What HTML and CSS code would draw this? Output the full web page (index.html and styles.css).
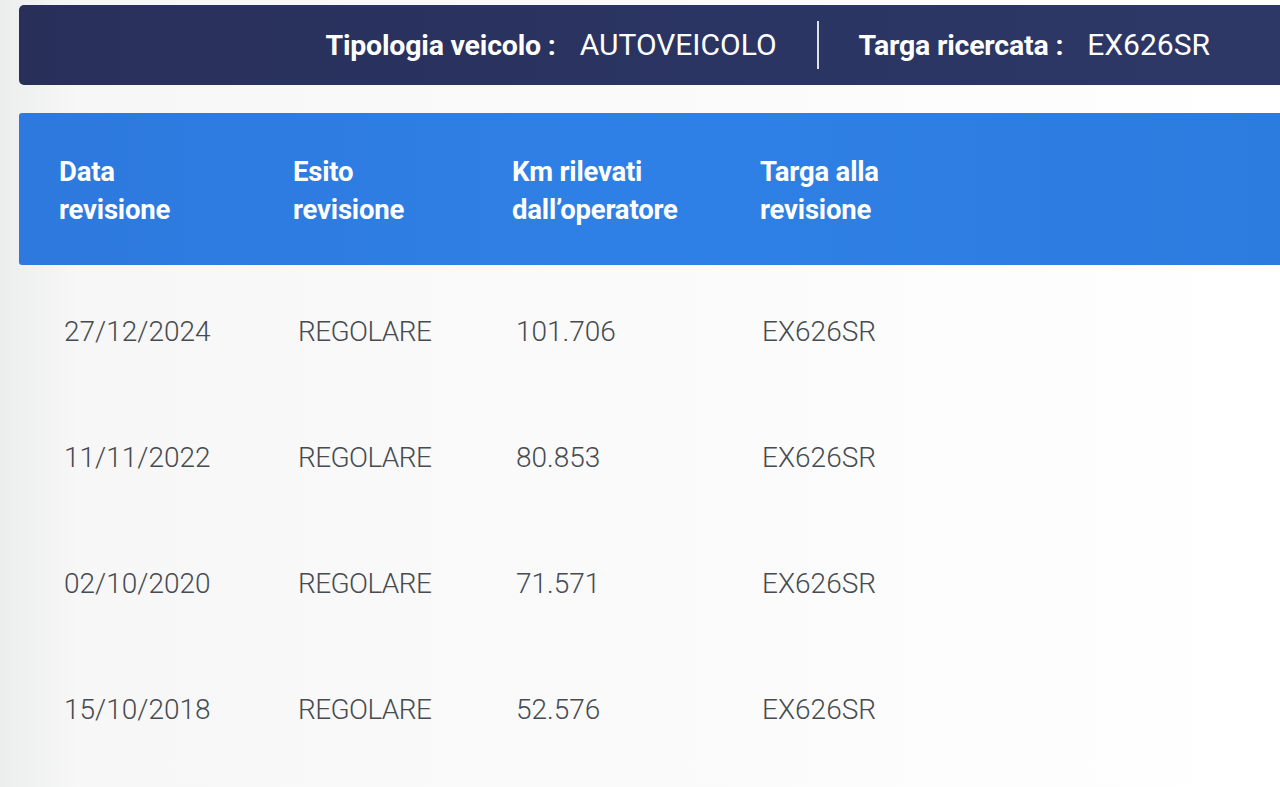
FILE: index.html
```html
<!DOCTYPE html>
<html lang="it">
<head>
<meta charset="utf-8">
<title>Revisioni veicolo</title>
<link rel="stylesheet" href="styles.css">
</head>
<body>
<div class="page">
  <div class="topbar">
    <div class="info"><span class="label">Tipologia veicolo :</span><span class="value">AUTOVEICOLO</span></div>
    <div class="divider"></div>
    <div class="info"><span class="label">Targa ricercata :</span><span class="value">EX626SR</span></div>
  </div>

  <div class="table">
    <div class="thead">
      <div class="th">Data<br>revisione</div>
      <div class="th">Esito<br>revisione</div>
      <div class="th">Km rilevati<br>dall’operatore</div>
      <div class="th">Targa alla<br>revisione</div>
    </div>
    <div class="tbody">
      <div class="row">
        <div class="td">27/12/2024</div>
        <div class="td">REGOLARE</div>
        <div class="td">101.706</div>
        <div class="td">EX626SR</div>
      </div>
      <div class="row">
        <div class="td">11/11/2022</div>
        <div class="td">REGOLARE</div>
        <div class="td">80.853</div>
        <div class="td">EX626SR</div>
      </div>
      <div class="row">
        <div class="td">02/10/2020</div>
        <div class="td">REGOLARE</div>
        <div class="td">71.571</div>
        <div class="td">EX626SR</div>
      </div>
      <div class="row">
        <div class="td">15/10/2018</div>
        <div class="td">REGOLARE</div>
        <div class="td">52.576</div>
        <div class="td">EX626SR</div>
      </div>
    </div>
  </div>
</div>
</body>
</html>
```

FILE: styles.css
```css
html, body {
  margin: 0;
  padding: 0;
}

body {
  background: linear-gradient(90deg, #eceeed 0%, #f6f7f6 6%, #fbfbfb 60%, #ffffff 100%);
  font-family: Roboto, "Open Sans", "Liberation Sans", sans-serif;
  height: 787px;
  overflow: hidden;
}

.page {
  padding: 5px 0 0 19px;
}

.topbar {
  height: 80px;
  background: linear-gradient(90deg, #28305a 0%, #2b3563 60%, #2d3867 100%);
  border-radius: 5px 0 0 5px;
  display: flex;
  align-items: center;
  justify-content: flex-end;
  padding-right: 70px;
  gap: 40px;
  color: #ffffff;
}

.info {
  display: flex;
  align-items: baseline;
  gap: 24px;
  line-height: 1;
}

.label {
  font-size: 28.5px;
  font-weight: 700;
  letter-spacing: -0.2px;
}

.value {
  font-size: 30px;
  font-weight: 400;
}

.divider {
  width: 2px;
  height: 48px;
  background: rgba(255, 255, 255, 0.85);
}

.table {
  margin-top: 28px;
}

.thead {
  height: 152px;
  background: linear-gradient(90deg, #2d79de 0%, #2f80e6 50%, #2c7bdf 100%);
  border-radius: 3px 0 0 3px;
  display: grid;
  grid-template-columns: 234px 219px 248px 1fr;
  align-items: center;
  padding-left: 40px;
  color: #ffffff;
}

.th {
  font-size: 27.5px;
  font-weight: 700;
  line-height: 38px;
  letter-spacing: -0.2px;
  padding-top: 4px;
}

.tbody {
  padding-top: 3px;
}

.row {
  height: 126px;
  display: grid;
  grid-template-columns: 234px 218px 246px 1fr;
  align-items: center;
  padding-left: 45px;
}

.td {
  font-size: 28px;
  font-weight: 300;
  color: #464b50;
}

.td:nth-child(2) {
  letter-spacing: -0.6px;
}
```
